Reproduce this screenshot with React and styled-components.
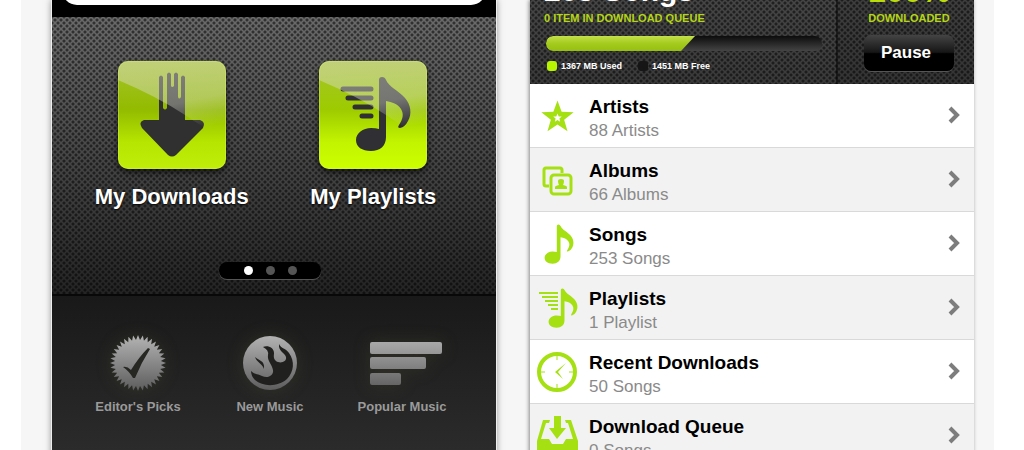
import styled, { createGlobalStyle, css } from 'styled-components';

const LIME = '#a5e013';

const GlobalStyle = createGlobalStyle`
  * {
    box-sizing: border-box;
  }
  body {
    margin: 0;
    background: #fff;
    font-family: "Liberation Sans", Arial, sans-serif;
  }
`;

const mesh = css`
  background-image:
    radial-gradient(circle at center, rgba(0, 0, 0, 0.6) 0, rgba(0, 0, 0, 0.5) 1px, transparent 2px),
    radial-gradient(circle at center, rgba(0, 0, 0, 0.6) 0, rgba(0, 0, 0, 0.5) 1px, transparent 2px),
    linear-gradient(${props => props.$from}, ${props => props.$to});
  background-size: 6px 6px, 6px 6px, 100% 100%;
  background-position: 0 0, 3px 3px, 0 0;
`;

const Stage = styled.main`
  display: grid;
  grid-template-columns: 1fr 1fr;
  gap: 34px;
  height: 100vh;
  margin: 0 30px 0 21px;
  padding: 0 20px 0 31px;
  overflow: hidden;
  background: #f6f6f6;
`;

const Phone = styled.section`
  display: flex;
  flex-direction: column;
  min-width: 0;
  box-shadow: ${props => props.$shadow};
`;

const SearchBar = styled.div`
  display: flex;
  align-items: flex-end;
  height: 17px;
  padding: 0 10px 12px;
  overflow: hidden;
  background: #000;
`;

const SearchInput = styled.input`
  flex: 1;
  min-width: 0;
  height: 30px;
  padding: 0 16px;
  border: 0;
  border-radius: 15px;
  background: #fff;
`;

const Springboard = styled.div`
  ${mesh}
  height: 279px;
  padding-top: 44px;
  border-bottom: 2px solid #080808;
`;

const AppGrid = styled.div`
  display: grid;
  grid-template-columns: 1fr 1fr;
  padding: 0 22px 0 19px;
`;

const AppButton = styled.button`
  display: flex;
  flex-direction: column;
  align-items: center;
  gap: 15px;
  padding: 0;
  border: 0;
  background: none;
  color: #fff;
  font: bold 22px/26px "Liberation Sans", Arial, sans-serif;
  text-shadow: 0 1px 2px #000;
`;

const AppTile = styled.span`
  display: block;
  width: 108px;
  height: 108px;
  overflow: hidden;
  border-radius: 10px;
  background: ${props => props.$fill};
  box-shadow: 0 3px 6px rgba(0, 0, 0, 0.7);

  svg {
    display: block;
  }
`;

const Pager = styled.div`
  display: flex;
  align-items: center;
  justify-content: center;
  gap: 13px;
  width: 102px;
  height: 17px;
  margin: 52px auto 0;
  border-radius: 8px;
  background: #000;
  box-shadow: 0 1px 0 #555;
`;

const PagerRow = styled.div`
  padding-right: 8px;
`;

const PagerDot = styled.button`
  width: 9px;
  height: 9px;
  padding: 0;
  border: 0;
  border-radius: 50%;
  background: ${props => (props.$active ? '#fff' : '#555')};
`;

const Dock = styled.nav`
  flex: 1;
  display: grid;
  grid-template-columns: repeat(3, 1fr);
  align-items: start;
  padding: 39px 28px 0 20px;
  background: linear-gradient(#191919, #2d2d2d);
`;

const DockLink = styled.a`
  display: flex;
  flex-direction: column;
  align-items: center;
  gap: 8px;
  color: #9a9a9a;
  font-weight: bold;
  font-size: 13px;
  line-height: 16px;
  text-decoration: none;

  svg {
    display: block;
    overflow: visible;
    filter: drop-shadow(0 0 8px rgba(90, 90, 50, 0.25));
  }
`;

const StatusHeader = styled.header`
  ${mesh}
  display: grid;
  grid-template-columns: 1fr 138px;
  grid-template-rows: 100%;
  flex: none;
  height: 84px;
  overflow: hidden;
  color: #fff;
`;

const Storage = styled.div`
  display: flex;
  flex-direction: column;
  justify-content: flex-end;
  padding: 0 14px 13px;
`;

const Transfer = styled.div`
  display: flex;
  flex-direction: column;
  align-items: center;
  justify-content: flex-end;
  padding: 0 0 13px 6px;
  border-left: 2px solid rgba(0, 0, 0, 0.5);
  background: rgba(0, 0, 0, 0.1);
`;

const BigFigure = styled.div`
  flex: none;
  font-weight: bold;
  font-size: ${props => (props.$accent ? 32 : 30)}px;
  line-height: 38px;
  color: ${props => (props.$accent ? '#b9dc0a' : '#fff')};
`;

const Caption = styled.div`
  flex: none;
  font-weight: bold;
  font-size: 11px;
  line-height: 16px;
  color: #b5d516;
  white-space: nowrap;
`;

const Meter = styled.div`
  flex: none;
  height: 15px;
  margin: 10px 0 10px 2px;
  overflow: hidden;
  border-radius: 7px;
  background: linear-gradient(#0c0c0c, #444);
`;

const MeterFill = styled.div`
  height: 100%;
  border-radius: 7px 0 0 7px;
  background: linear-gradient(#c3e04a, #a4cb1d 50%, #95bf12);
  clip-path: polygon(0 0, 100% 0, calc(100% - 14px) 100%, 0 100%);
`;

const Legend = styled.div`
  display: flex;
  gap: 16px;
  padding-left: 3px;
  font-weight: bold;
  font-size: 9px;
  line-height: 10px;
`;

const LegendItem = styled.span`
  display: flex;
  gap: 4px;

  &::before {
    content: "";
    width: 10px;
    height: 10px;
    border-radius: 3px;
    background: ${props => props.$swatch};
  }
`;

const PauseButton = styled.button`
  flex: none;
  width: 90px;
  height: 36px;
  margin-top: 9px;
  padding: 0 6px 0 0;
  border: 0;
  border-radius: 7px;
  background: linear-gradient(#444, #161616 48%, #000 52%);
  box-shadow: 0 1px 0 #555;
  color: #fff;
  font: bold 17px/36px "Liberation Sans", Arial, sans-serif;
`;

const Library = styled.ul`
  margin: 0;
  padding: 0;
  list-style: none;
  background: #fff;
`;

const LibraryItem = styled.li`
  border-bottom: 1px solid #d9d9d9;

  &:nth-child(even) {
    background: #f2f2f2;
  }
`;

const LibraryLink = styled.a`
  display: flex;
  align-items: center;
  gap: 12px;
  min-height: 63px;
  padding: 2px 13px 0 7px;
  color: #000;
  text-decoration: none;

  svg {
    flex: none;
    overflow: visible;
  }
`;

const LibraryText = styled.span`
  flex: 1;
  display: flex;
  flex-direction: column;
  padding-top: 5px;
  line-height: 24px;
`;

const ItemTitle = styled.strong`
  font-size: 19px;
`;

const ItemCount = styled.span`
  font-size: 17px;
  color: #8a8a8a;
`;

// alternates between two radii, used for the star and for the badge teeth
function spikes(cx, cy, outer, inner, count) {
  return Array.from({ length: count * 2 }, (_, i) => {
    const r = i % 2 ? inner : outer;
    const a = (Math.PI * i) / count - Math.PI / 2;
    return `${(cx + r * Math.cos(a)).toFixed(2)},${(cy + r * Math.sin(a)).toFixed(2)}`;
  }).join(' ');
}

const NOTE = 'M60 19 Q60 16 63 16 Q66 16 67 19 C70 26 80 30 86 37 C92 44 93 53 89 60 Q86 66 81 67 Q78 67 80 64 C84 58 85 53 82 48 C79 43 73 41 67 40 V76 C67 85 61 90 52 90 C43 90 37 86 37 79 C37 72 44 67 52 67 Q57 67 60 68 Z';

function Gloss({ id }) {
  return (
    <>
      <defs>
        <linearGradient id={id} x1="0" y1="0" x2="0.3" y2="1">
          <stop offset="0" stopColor="#dcdcc8" stopOpacity="0.5" />
          <stop offset="0.65" stopColor="#dcdcd0" stopOpacity="0.4" />
          <stop offset="1" stopColor="#dcdcd0" stopOpacity="0" />
        </linearGradient>
      </defs>
      <path d="M0 0 H108 V78 Q84 66 67 54 Q40 36 0 19 Z" fill={`url(#${id})`} />
      <rect x="0.5" y="0.5" width="107" height="107" rx="10" fill="none" stroke="#d8f060" strokeOpacity="0.4" />
    </>
  );
}

function DownloadArt() {
  return (
    <svg width="108" height="108" viewBox="0 0 108 108" aria-hidden="true">
      <path
        d="M41 59 V16 Q43 13 45 16 V47 Q47 50 49 47 V13 Q51 10 53 13 V25 Q54 27 56 25 V13 Q58 10 60 13 V36 Q61 39 63 36 V16 Q65 13 67 16 V59 H82 Q88 61 85 67 L58 94 Q54 97 50 94 L24 67 Q20 61 26 59 Z"
        fill="#303030"
      />
      <Gloss id="gloss-download" />
    </svg>
  );
}

function PlaylistArt() {
  return (
    <svg width="108" height="108" viewBox="0 0 108 108" aria-hidden="true">
      <path d={NOTE} fill="#303034" />
      <path d="M24 28 H52 M29 37 H52 M36 46 H52 M43 55 H52" stroke="#303034" strokeWidth="5" strokeLinecap="round" />
      <Gloss id="gloss-playlist" />
    </svg>
  );
}

function Metal({ id }) {
  return (
    <defs>
      <linearGradient id={id} gradientUnits="userSpaceOnUse" x1="0" y1="0" x2="0" y2="56">
        <stop offset="0" stopColor="#b4b4b4" />
        <stop offset="1" stopColor="#5c5c5c" />
      </linearGradient>
    </defs>
  );
}

function BadgeIcon() {
  return (
    <svg width="56" height="56" viewBox="0 0 56 56" aria-hidden="true">
      <Metal id="metal-badge" />
      <polygon points={spikes(28, 28, 28, 23, 36)} fill="url(#metal-badge)" />
      <path d="M13 32 Q17 31 21 35 Q29 22 38 13 L40 14 Q31 28 25 43 L23 43 Q19 36 13 32 Z" fill="#262622" />
    </svg>
  );
}

function FlameIcon() {
  return (
    <svg width="56" height="56" viewBox="0 0 56 56" aria-hidden="true">
      <Metal id="metal-flame" />
      <circle cx="28" cy="28" r="27" fill="url(#metal-flame)" />
      <path
        d="M21 12 C26 10 32 13 32 18 C32 21 31 23 34 26 C38 29 45 27 44 22 C43 18 36 16 37 9 C39 14 44 13 47 18 C53 26 52 37 45 44 C36 52 21 52 13 45 Q9 41 9 36 C13 40 17 39 20 41 C26 44 32 40 31 35 C30 29 25 26 26 20 Q27 15 21 12 Z"
        fill="#20201e"
      />
      <path d="M13 22 C17 26 23 25 22 34 C20 28 15 28 13 22 Z" fill="#20201e" />
    </svg>
  );
}

function BarsIcon() {
  return (
    <svg width="80" height="56" viewBox="0 0 80 56" aria-hidden="true">
      <Metal id="metal-bars" />
      <g fill="url(#metal-bars)">
        <rect x="8" y="7" width="72" height="12" rx="2" />
        <rect x="8" y="22" width="56" height="12" rx="2" />
        <rect x="8" y="38" width="31" height="12" rx="2" />
      </g>
    </svg>
  );
}

function ListIcon({ children }) {
  return (
    <svg width="40" height="40" viewBox="0 0 40 40" fill={LIME} aria-hidden="true">
      {children}
    </svg>
  );
}

const starIcon = (
  <ListIcon>
    <polygon points={spikes(20.5, 20.5, 17, 7, 5)} />
    <polygon points={spikes(20.5, 21, 4.5, 2, 5)} fill="#fff" />
  </ListIcon>
);

const albumsIcon = (
  <ListIcon>
    <path d="M12 25 H9 Q7 25 7 23 V9 Q7 7 9 7 H23 Q25 7 25 9 V12" fill="none" stroke={LIME} strokeWidth="3" />
    <rect x="14" y="14" width="20" height="19" rx="3" fill="#f2f2f2" stroke={LIME} strokeWidth="3" />
    <path d="M18 28 V26 Q18 25 22 24 Q21 22 21 20 Q21 18 24 18 Q27 18 27 20 Q27 22 26 24 Q30 25 30 26 V28 Z" />
  </ListIcon>
);

const songsIcon = (
  <ListIcon>
    <path d={NOTE} transform="translate(-12 -9) scale(0.53)" />
  </ListIcon>
);

const playlistsIcon = (
  <ListIcon>
    <path d={NOTE} transform="translate(-8 -9) scale(0.53)" />
    <path d="M2 4 H21 M5 8 H21 M8 12 H21 M11 16 H21 M14 20 H21" stroke={LIME} strokeWidth="2" />
  </ListIcon>
);

const clockIcon = (
  <ListIcon>
    <circle cx="20" cy="19" r="18" fill="#fff" stroke={LIME} strokeWidth="4" />
    <path d="M20 3 V7 M20 31 V35 M4 19 H8 M32 19 H36" stroke={LIME} strokeWidth="1" />
    <path d="M18 19 L29 10 L21 19 L26 26 Z" />
  </ListIcon>
);

const trayIcon = (
  <ListIcon>
    <path d="M17 -1 H24 V11 H29 L20 22 L12 11 H17 Z" />
    <path d="M0 24 L6 3 H13 L12 6 H9 L4 22 H12 L15 27 H26 L29 22 H36 L31 6 H29 L28 3 H34 L41 24 V40 H0 Z" />
  </ListIcon>
);

function Chevron() {
  return (
    <svg width="14" height="18" viewBox="0 0 14 18" fill="none" stroke="#7d7d7d" strokeWidth="4" aria-hidden="true">
      <path d="M3 0 L10 7 L3 14" />
    </svg>
  );
}

const library = [
  { title: 'Artists', count: '88 Artists', icon: starIcon },
  { title: 'Albums', count: '66 Albums', icon: albumsIcon },
  { title: 'Songs', count: '253 Songs', icon: songsIcon },
  { title: 'Playlists', count: '1 Playlist', icon: playlistsIcon },
  { title: 'Recent Downloads', count: '50 Songs', icon: clockIcon },
  { title: 'Download Queue', count: '0 Songs', icon: trayIcon },
];

function HomeScreen() {
  return (
    <Phone $shadow="0 0 0 1px #eee, 0 0 7px rgba(0, 0, 0, 0.5)">
      <SearchBar>
        <SearchInput type="search" aria-label="Search" />
      </SearchBar>
      <Springboard $from="#6a6a6a" $to="#242424">
        <AppGrid>
          <AppButton type="button">
            <AppTile $fill="linear-gradient(#a6c42c, #93bb00 45%, #b5e500 75%, #c0ee0a)">
              <DownloadArt />
            </AppTile>
            My Downloads
          </AppButton>
          <AppButton type="button">
            <AppTile $fill="linear-gradient(#a6c42c, #9dcb00 45%, #c2f400 75%, #ccff00)">
              <PlaylistArt />
            </AppTile>
            My Playlists
          </AppButton>
        </AppGrid>
        <PagerRow>
          <Pager>
            <PagerDot type="button" aria-label="Page 1" $active />
            <PagerDot type="button" aria-label="Page 2" />
            <PagerDot type="button" aria-label="Page 3" />
          </Pager>
        </PagerRow>
      </Springboard>
      <Dock>
        <DockLink href="#picks"><BadgeIcon />Editor's Picks</DockLink>
        <DockLink href="#new"><FlameIcon />New Music</DockLink>
        <DockLink href="#popular"><BarsIcon />Popular Music</DockLink>
      </Dock>
    </Phone>
  );
}

function LibraryScreen({ used, free }) {
  // the slanted end of the bar leans past the exact share
  const share = Math.round((used / (used + free)) * 100) + 5;

  return (
    <Phone $shadow="-1px 0 4px rgba(0, 0, 0, 0.45)">
      <StatusHeader $from="#464646" $to="#3a3a3a">
        <Storage>
          <BigFigure>253 Songs</BigFigure>
          <Caption>0 ITEM IN DOWNLOAD QUEUE</Caption>
          <Meter>
            <MeterFill style={{ width: `${share}%` }} />
          </Meter>
          <Legend>
            <LegendItem $swatch="#b8f500">{used} MB Used</LegendItem>
            <LegendItem $swatch="#161616">{free} MB Free</LegendItem>
          </Legend>
        </Storage>
        <Transfer>
          <BigFigure $accent>100%</BigFigure>
          <Caption>DOWNLOADED</Caption>
          <PauseButton type="button">Pause</PauseButton>
        </Transfer>
      </StatusHeader>
      <Library>
        {library.map(item => (
          <LibraryItem key={item.title}>
            <LibraryLink href="#library">
              {item.icon}
              <LibraryText>
                <ItemTitle>{item.title}</ItemTitle>
                <ItemCount>{item.count}</ItemCount>
              </LibraryText>
              <Chevron />
            </LibraryLink>
          </LibraryItem>
        ))}
      </Library>
    </Phone>
  );
}

export default function App() {
  return (
    <>
      <GlobalStyle />
      <Stage>
        <HomeScreen />
        <LibraryScreen used={1367} free={1451} />
      </Stage>
    </>
  );
}
